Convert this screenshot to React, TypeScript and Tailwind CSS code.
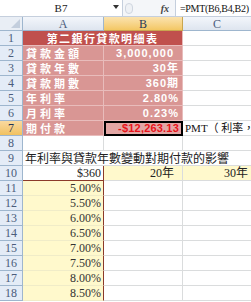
import type { ReactNode } from "react"

const SERIF = "font-['Liberation_Serif','Noto_Sans_CJK_TC',serif]"
const CJK = "font-['Noto_Sans_CJK_TC','Liberation_Sans',sans-serif]"
const BOLDNUM = "font-['Liberation_Sans','Noto_Sans_CJK_TC',sans-serif] font-bold"

const grid = "border-r border-b border-[#dadcdd]"
const pinkLine = "border-r border-b border-[#e8bcbb]"
const pink = "bg-[#d99694]"

function RowHead({ n, active }: { n: number; active?: boolean }) {
  return (
    <div
      className={`flex items-center justify-center border-r border-b border-[#9eb6ce] text-[12px] leading-none ${SERIF} ${
        active ? "bg-gradient-to-b from-[#f9d99f] to-[#f1c15f] text-[#1f3355]" : "bg-[#e4ecf7] text-[#4b5d7c]"
      }`}
    >
      {n}
    </div>
  )
}

function Cell({ className = "", children }: { className?: string; children?: ReactNode }) {
  return <div className={`flex items-center overflow-hidden whitespace-nowrap leading-none ${className}`}>{children}</div>
}

const loan = [
  { label: "貸款金額", value: "3,000,000", pad: "pr-[8px]" },
  { label: "貸款年數", value: "30年", pad: "pr-[3px]" },
  { label: "貸款期數", value: "360期", pad: "pr-[3px]" },
  { label: "年利率", value: "2.80%", pad: "pr-[3px]" },
  { label: "月利率", value: "0.23%", pad: "pr-[3px]" },
]

const rates = ["5.00%", "5.50%", "6.00%", "6.50%", "7.00%", "7.50%", "8.00%", "8.50%"]

export default function App() {
  return (
    <div className="h-[302px] w-[251px] overflow-hidden bg-white">
      {/* formula bar */}
      <div className="flex h-[17px] border-b border-[#c5cfdd] bg-white">
        <div className={`relative flex w-[123px] items-center justify-center border-r border-[#c5cfdd] text-[11px] text-[#222] ${SERIF}`}>
          B7
          <span className="absolute right-[3px] top-[5px] h-0 w-0 border-x-[3px] border-t-[4px] border-x-transparent border-t-[#333]" />
        </div>
        <div className="flex w-[52px] items-center bg-[#f4f6f9]">
          <span className="ml-[2px] h-[11px] w-[8px] rounded-full border border-[#cfd6e0] bg-[#eef1f5]" />
          <span className={`ml-auto mr-[6px] text-[10px] font-bold italic text-[#444] ${SERIF}`}>fx</span>
        </div>
        <div className={`flex flex-1 items-center border-l border-[#c5cfdd] pl-[4px] text-[10px] tracking-[-0.3px] text-[#111] ${SERIF}`}>
          =PMT(B6,B4,B2)
        </div>
      </div>

      {/* sheet */}
      <div className="grid grid-cols-[23px_81px_79px_68px] grid-rows-[14px] auto-rows-[15px]">
        {/* column headers */}
        <div className="relative border-r border-b border-[#9eb6ce] bg-[#e9eef5]">
          <span className="absolute bottom-[2px] right-[2px] h-0 w-0 border-b-[9px] border-l-[9px] border-b-[#c3cedd] border-l-transparent" />
        </div>
        <div className={`flex items-center justify-center border-r border-b border-[#9eb6ce] bg-gradient-to-b from-[#f3f6fb] to-[#dee5ef] text-[12px] text-[#4b5d7c] ${SERIF}`}>A</div>
        <div className={`flex items-center justify-center border-r border-b border-[#c9a64f] bg-gradient-to-b from-[#fbe3ae] to-[#f3c763] text-[12px] text-[#2b3a55] ${SERIF}`}>B</div>
        <div className={`flex items-center justify-center border-b border-[#9eb6ce] bg-gradient-to-b from-[#f3f6fb] to-[#dee5ef] text-[12px] text-[#4b5d7c] ${SERIF}`}>C</div>

        {/* row 1 */}
        <RowHead n={1} />
        <Cell className={`col-span-2 justify-center bg-[#c0504d] border-r border-b border-[#e8bcbb] text-[11px] font-bold tracking-[1.4px] text-white ${CJK}`}>
          第二銀行貸款明細表
        </Cell>
        <Cell className="border-b border-[#dadcdd]" />

        {/* rows 2-6 */}
        {loan.map((r, i) => (
          <div key={r.label} className="contents">
            <RowHead n={i + 2} />
            <Cell className={`${pink} ${pinkLine} pl-[3px] text-[11px] font-bold tracking-[3px] text-white ${CJK}`}>{r.label}</Cell>
            <Cell className={`${pink} ${pinkLine} justify-end ${r.pad} text-[11px] tracking-[1px] text-white ${BOLDNUM}`}>{r.value}</Cell>
            <Cell className="border-b border-[#dadcdd]" />
          </div>
        ))}

        {/* row 7 */}
        <RowHead n={7} active />
        <Cell className={`${pink} ${pinkLine} pl-[3px] text-[11px] font-bold tracking-[3px] text-white ${CJK}`}>期付款</Cell>
        <Cell className={`bg-[#e3a7a5] border-2 border-black justify-end pr-[2px] text-[11px] tracking-[0.2px] text-[#e8141b] ${BOLDNUM}`}>
          -$12,263.13
        </Cell>
        <Cell className={`border-b border-[#dadcdd] pl-[2px] text-[11px] text-[#111] ${SERIF}`}>PMT（ 利率，</Cell>

        {/* row 8 */}
        <RowHead n={8} />
        <Cell className={grid} />
        <Cell className={grid} />
        <Cell className="border-b border-[#dadcdd]" />

        {/* row 9 */}
        <RowHead n={9} />
        <Cell className={`col-span-3 border-b border-[#dadcdd] pl-[2px] text-[12px] text-[#222] ${CJK}`}>
          年利率與貸款年數變動對期付款的影響
        </Cell>

        {/* row 10 */}
        <RowHead n={10} />
        <Cell className={`justify-end border-r border-b border-[#8b3a2a] pr-[2px] text-[12px] text-[#222] ${SERIF}`}>$360</Cell>
        <Cell className={`justify-end bg-[#fff9cc] ${grid} pr-[8px] text-[12px] text-[#222] ${SERIF}`}>20年</Cell>
        <Cell className={`justify-end bg-[#fff9cc] border-b border-[#dadcdd] pr-[3px] text-[12px] text-[#222] ${SERIF}`}>30年</Cell>

        {/* rows 11-18 */}
        {rates.map((r, i) => (
          <div key={r} className="contents">
            <RowHead n={i + 11} />
            <Cell className={`justify-end bg-[#fff9cc] border-r border-r-[#8b3a2a] border-b border-b-[#f0ecc8] pr-[2px] text-[12px] text-[#333] ${SERIF}`}>{r}</Cell>
            <Cell className={grid} />
            <Cell className="border-b border-[#dadcdd]" />
          </div>
        ))}
      </div>
    </div>
  )
}
